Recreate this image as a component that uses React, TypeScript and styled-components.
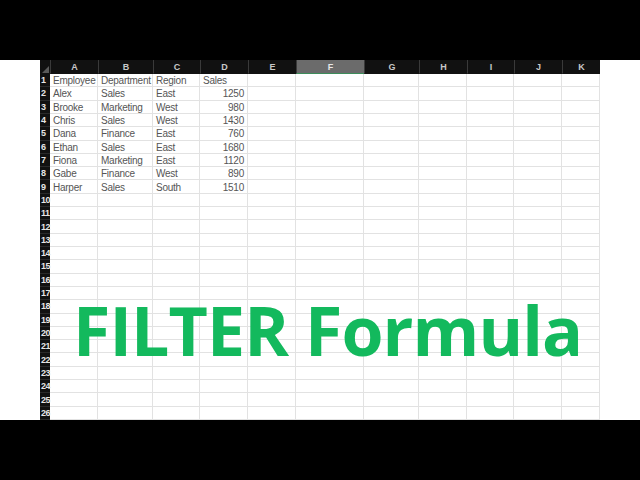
import React from "react";
import styled, { createGlobalStyle } from "styled-components";

const Global = createGlobalStyle`
  html, body { margin: 0; padding: 0; background: #ffffff; }
  body { width: 640px; height: 480px; overflow: hidden; }
`;

const Frame = styled.div`
  width: 640px;
  height: 480px;
  display: flex;
  flex-direction: column;
`;

const Bar = styled.div`
  height: 60px;
  background: #000000;
  flex: none;
`;

const Stage = styled.div`
  position: relative;
  height: 360px;
  display: flex;
  background: #ffffff;
`;

const Gutter = styled.div`
  width: 40px;
  flex: none;
`;

const Sheet = styled.div`
  width: 560px;
  height: 360px;
  display: grid;
  grid-template-columns: 10px 48px 55px 47px 48px 48px 68px 55px 48px 47px 48px 38px;
  grid-template-rows: 14px repeat(26, 1fr);
  font-family: "Liberation Sans", Arial, sans-serif;
`;

const Corner = styled.div`
  background: #111111;
  position: relative;
  &::after {
    content: "";
    position: absolute;
    right: 1px;
    bottom: 1px;
    width: 0;
    height: 0;
    border-left: 7px solid transparent;
    border-bottom: 7px solid #5a5a5a;
  }
`;

const ColHead = styled.div<{ $sel?: boolean }>`
  background: ${(p) => (p.$sel ? "#6b6b6b" : "#111111")};
  color: ${(p) => (p.$sel ? "#e8e8e8" : "#c8c8c8")};
  border-left: 1px solid #3a3a3a;
  border-bottom: ${(p) => (p.$sel ? "1px solid #3c8c5a" : "1px solid #111111")};
  font-size: 9px;
  font-weight: 700;
  display: flex;
  align-items: center;
  justify-content: center;
  box-sizing: border-box;
`;

const RowHead = styled.div`
  background: #111111;
  color: #e6e6e6;
  font-size: 9px;
  font-weight: 700;
  display: flex;
  align-items: center;
  padding-left: 1px;
  border-bottom: 1px solid #2a2a2a;
  box-sizing: border-box;
  overflow: visible;
  white-space: nowrap;
  letter-spacing: -0.5px;
`;

const Cell = styled.div<{ $num?: boolean }>`
  border-right: 1px solid #e2e2e2;
  border-bottom: 1px solid #e2e2e2;
  box-sizing: border-box;
  font-size: 10px;
  letter-spacing: -0.25px;
  color: #555555;
  display: flex;
  align-items: center;
  justify-content: ${(p) => (p.$num ? "flex-end" : "flex-start")};
  padding: 1px 3px 0;
  white-space: nowrap;
  overflow: hidden;
`;

const Title = styled.div`
  position: absolute;
  left: 73px;
  top: 236px;
  font-family: "Open Sans", "Liberation Sans", sans-serif;
  font-weight: 700;
  font-size: 68px;
  letter-spacing: -0.9px;
  line-height: 1;
  color: #13b95d;
  white-space: nowrap;
`;

const cols = ["A", "B", "C", "D", "E", "F", "G", "H", "I", "J", "K"];

const data: (string | number)[][] = [
  ["Employee", "Department", "Region", "Sales"],
  ["Alex", "Sales", "East", 1250],
  ["Brooke", "Marketing", "West", 980],
  ["Chris", "Sales", "West", 1430],
  ["Dana", "Finance", "East", 760],
  ["Ethan", "Sales", "East", 1680],
  ["Fiona", "Marketing", "East", 1120],
  ["Gabe", "Finance", "West", 890],
  ["Harper", "Sales", "South", 1510],
];

export default function App() {
  const rows = Array.from({ length: 26 }, (_, i) => i);
  return (
    <>
      <Global />
      <Frame>
        <Bar />
        <Stage>
          <Gutter />
          <Sheet>
            <Corner />
            {cols.map((c) => (
              <ColHead key={c} $sel={c === "F"}>
                {c}
              </ColHead>
            ))}
            {rows.map((r) => (
              <React.Fragment key={r}>
                <RowHead>{r + 1}</RowHead>
                {cols.map((c, ci) => {
                  const v = data[r]?.[ci];
                  return (
                    <Cell key={c} $num={typeof v === "number"}>
                      {v ?? ""}
                    </Cell>
                  );
                })}
              </React.Fragment>
            ))}
          </Sheet>
          <Gutter />
          <Title>FILTER Formula</Title>
        </Stage>
        <Bar />
      </Frame>
    </>
  );
}
